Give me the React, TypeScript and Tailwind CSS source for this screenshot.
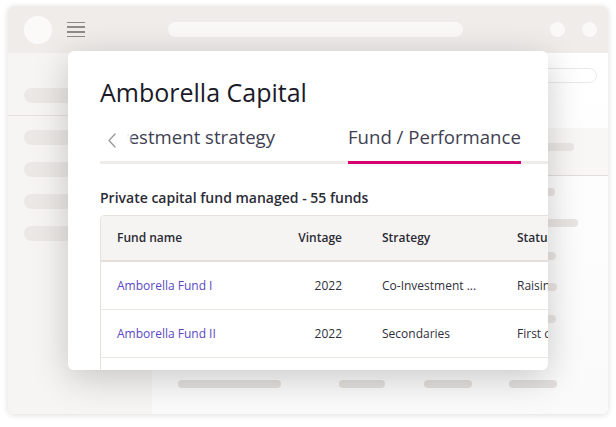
import React from 'react';

const Pill = ({ className }: { className: string }) => <div className={`rounded-full ${className}`} />;

function Backdrop() {
  return (
    <div className="w-[600px] h-[408px] rounded-[6px] bg-white shadow-[0_1px_6px_rgba(0,0,0,0.14)] overflow-hidden flex flex-col blur-[0.6px]">
      {/* top bar */}
      <div className="h-[47px] shrink-0 bg-[#efecea] flex items-center pl-[16px] pr-[11px]">
        <div className="w-[28px] h-[28px] rounded-full bg-[#fbfaf9]" />
        <div className="ml-[15px] w-[18px] flex flex-col gap-[3px]">
          {[0, 1, 2, 3].map((i) => <div key={i} className="h-[1.6px] bg-[#8f8b88]" />)}
        </div>
        <Pill className="ml-[83px] w-[295px] h-[15px] bg-[#faf9f8]" />
        <div className="ml-auto flex gap-[17px]">
          <div className="w-[15px] h-[15px] rounded-full bg-[#faf9f8]" />
          <div className="w-[15px] h-[15px] rounded-full bg-[#faf9f8]" />
        </div>
      </div>
      <div className="flex flex-1">
        {/* sidebar */}
        <div className="w-[144px] shrink-0 bg-[#f6f5f3] flex flex-col">
          <div className="h-[63px] border-b border-[#e4e0dc] pt-[35px] pl-[16px]">
            <Pill className="w-[112px] h-[15px] bg-[#ebe8e5]" />
          </div>
          <div className="flex flex-col gap-[17px] pt-[14px] pl-[16px]">
            {[0, 1, 2, 3].map((i) => <Pill key={i} className="w-[112px] h-[15px] bg-[#ebe8e5]" />)}
          </div>
        </div>
        {/* main */}
        <div className="flex-1 flex flex-col bg-gradient-to-b from-white to-[#fafafa]">
          <div className="h-[75px] pt-[15px] pr-[11px] flex justify-end items-start">
            <Pill className="w-[200px] h-[15px] bg-white border border-[#ebe8e5]" />
          </div>
          <div className="h-[48px] bg-[#f8f7f6] border-b border-[#e2dedb] pt-[15px] pr-[34px] flex justify-end items-start">
            <Pill className="w-[140px] h-[8px] bg-[#ebe7e4]" />
          </div>
          <div className="flex flex-col items-end">
            <Pill className="mt-[12px] mr-[53px] w-[60px] h-[8px] bg-[#e9e5e2]" />
            <Pill className="mt-[23px] mr-[30px] w-[120px] h-[8px] bg-[#e9e5e2]" />
            <Pill className="mt-[25px] mr-[52px] w-[60px] h-[8px] bg-[#e9e5e2]" />
            <Pill className="mt-[23px] mr-[51px] w-[60px] h-[8px] bg-[#e9e5e2]" />
            <Pill className="mt-[24px] mr-[52px] w-[60px] h-[8px] bg-[#e9e5e2]" />
          </div>
          <div className="mt-[57px] pl-[26px] flex">
            <Pill className="w-[103px] h-[8px] bg-[#e3dfdc]" />
            <Pill className="ml-[58px] w-[46px] h-[8px] bg-[#e3dfdc]" />
            <Pill className="ml-[39px] w-[48px] h-[8px] bg-[#e3dfdc]" />
            <Pill className="ml-[37px] w-[48px] h-[8px] bg-[#e3dfdc]" />
          </div>
        </div>
      </div>
    </div>
  );
}

const funds = [
  { name: 'Amborella Fund I', vintage: '2022', strategy: 'Co-Investment ...', status: 'Raising' },
  { name: 'Amborella Fund II', vintage: '2022', strategy: 'Secondaries', status: 'First close' },
  { name: '', vintage: '', strategy: '', status: '' },
];

function Modal() {
  return (
    <div className="absolute left-[68px] top-[51px] w-[480px] h-[319px] rounded-[6px] bg-white shadow-[0_8px_36px_rgba(0,0,0,0.2)] overflow-hidden pl-[32px] pt-[25px]">
      <h1 className="text-[25px] leading-[32px] font-medium text-[#1a1a29]">Amborella Capital</h1>

      <div className="relative mt-[17px] flex gap-[73px] overflow-hidden shadow-[inset_0_-3px_0_#efebe8]">
        <div className="w-[175px] shrink-0 flex justify-end pb-[11px] border-b-[3px] border-transparent">
          <span className="text-[18.6px] leading-[24px] whitespace-nowrap text-[#3f3f52]">Investment strategy</span>
        </div>
        <div className="shrink-0 pb-[11px] border-b-[3px] border-[#d4006e]">
          <span className="text-[18.6px] leading-[24px] whitespace-nowrap text-[#3f3f52]">Fund / Performance</span>
        </div>
        <div className="shrink-0 pb-[11px] border-b-[3px] border-transparent">
          <span className="text-[18.6px] leading-[24px] whitespace-nowrap text-[#3f3f52]">Team</span>
        </div>
        <div className="absolute left-0 top-0 bottom-[3px] w-[33px] bg-gradient-to-r from-white from-[82%] to-transparent pl-[7px] pt-[8px]">
          <svg width="10" height="15" viewBox="0 0 10 15" fill="none">
            <path d="M8 1 L2 7.5 L8 14" stroke="#9a9a9a" strokeWidth="1.4" strokeLinecap="round" strokeLinejoin="round" />
          </svg>
        </div>
      </div>

      <h2 className="mt-[24px] text-[14px] leading-[20px] font-semibold text-[#2b2b36]">Private capital fund managed - 55 funds</h2>

      <div className="mt-[7px] w-[600px] border border-[#e6e1dc] rounded-[4px] overflow-hidden">
        <div className="h-[46px] bg-[#f6f4f2] border-b-2 border-[#e4dfda] flex items-center text-[12px] font-semibold text-[#2a2a35]">
          <div className="w-[181px] pl-[16px]">Fund name</div>
          <div className="w-[60px] text-right">Vintage</div>
          <div className="w-[175px] pl-[40px]">Strategy</div>
          <div className="flex-1">Status</div>
        </div>
        {funds.map((f, i) => (
          <div key={i} className="h-[48px] border-b border-[#ebe7e3] flex items-center text-[12px] text-[#30303b] whitespace-nowrap">
            <div className="w-[181px] pl-[16px] text-[#5848c4]">{f.name}</div>
            <div className="w-[60px] text-right">{f.vintage}</div>
            <div className="w-[175px] pl-[40px]">{f.strategy}</div>
            <div className="flex-1">{f.status}</div>
          </div>
        ))}
      </div>
    </div>
  );
}

export default function App() {
  return (
    <div className="relative w-[616px] h-[427px] bg-white overflow-hidden pt-[6px] pl-[8px] font-['Open_Sans',sans-serif]">
      <Backdrop />
      <Modal />
    </div>
  );
}
